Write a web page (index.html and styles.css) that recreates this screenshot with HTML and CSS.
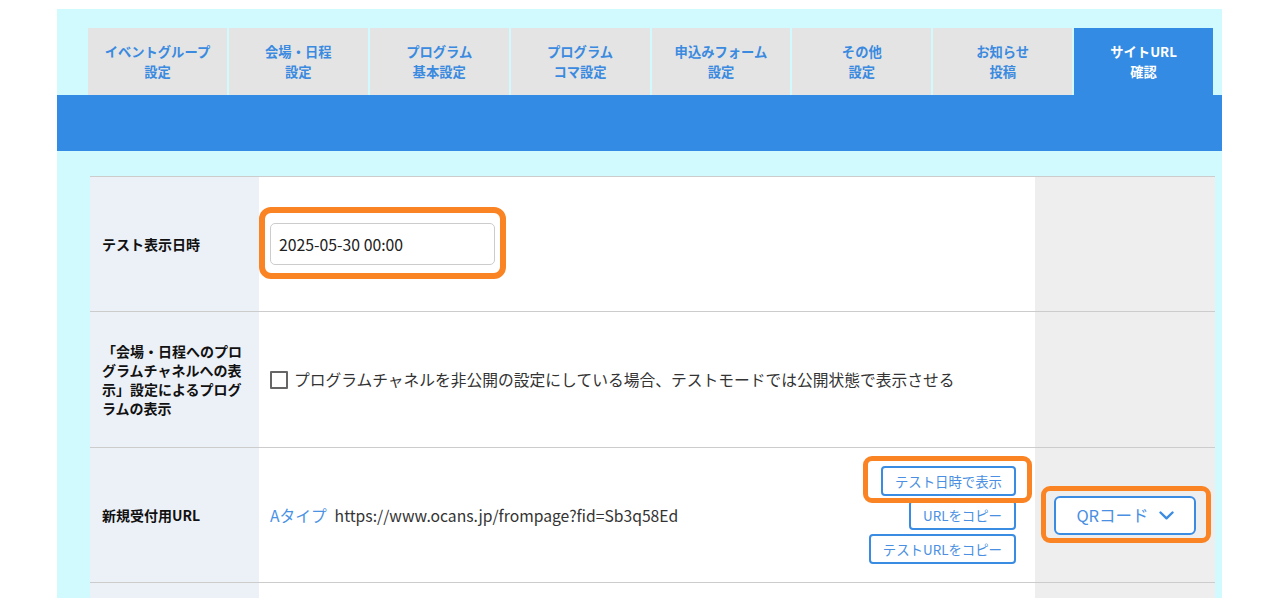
FILE: index.html
```html
<!DOCTYPE html>
<html lang="ja">
<head>
<meta charset="UTF-8">
<title>サイトURL確認</title>
<link rel="stylesheet" href="styles.css">
</head>
<body>
<div class="page">
<div class="tabs">
<div class="tab">イベントグループ<br>設定</div>
<div class="tab">会場・日程<br>設定</div>
<div class="tab">プログラム<br>基本設定</div>
<div class="tab">プログラム<br>コマ設定</div>
<div class="tab">申込みフォーム<br>設定</div>
<div class="tab">その他<br>設定</div>
<div class="tab">お知らせ<br>投稿</div>
<div class="tab active">サイトURL<br>確認</div>
</div>
<div class="band"></div>
<div class="settings">
<div class="row">
<div class="label">テスト表示日時</div>
<div class="value">
<span class="mark mark-input"><input class="date" type="text" value="2025-05-30 00:00"></span>
</div>
<div class="side"></div>
</div>
<div class="row row-tall">
<div class="label">「会場・日程へのプログラムチャネルへの表示」設定によるプログラムの表示</div>
<div class="value">
<label class="check"><span class="box"></span>プログラムチャネルを非公開の設定にしている場合、テストモードでは公開状態で表示させる</label>
</div>
<div class="side"></div>
</div>
<div class="row">
<div class="label">新規受付用URL</div>
<div class="value url-cell">
<div class="url"><span class="type">Aタイプ</span>https://www.ocans.jp/frompage?fid=Sb3q58Ed</div>
<div class="btns">
<span class="mark mark-btn"><button class="btn">テスト日時で表示</button></span>
<button class="btn">URLをコピー</button>
<button class="btn">テストURLをコピー</button>
</div>
</div>
<div class="side side-qr">
<span class="mark mark-qr"><button class="qr">QRコード<svg width="15" height="9" viewBox="0 0 15 9"><polyline points="1.5,1.5 7.5,7.3 13.5,1.5" fill="none" stroke="#3a8be2" stroke-width="2.4" stroke-linecap="round" stroke-linejoin="round"/></svg></button></span>
</div>
</div>
<div class="row">
<div class="label"></div>
<div class="value"></div>
<div class="side"></div>
</div>
</div>
</div>
</body>
</html>
```

FILE: styles.css
```css
body {
margin: 0;
background-color: #fff;
font-family: "Noto Sans CJK JP", "Noto Sans", sans-serif;
color: #333;
}
.page {
margin: 9px 0 0 57px;
width: 1165px;
height: 589px;
overflow: hidden;
background-color: #d1faff;
}
.tabs {
display: flex;
gap: 2px;
margin: 19px 9px 0 31px;
height: 67px;
}
.tab {
flex: 1;
display: flex;
align-items: center;
justify-content: center;
text-align: center;
background-color: #e4e4e4;
color: #3a8ae0;
font-size: 13.3px;
font-weight: bold;
line-height: 20px;
}
.tab.active {
background-color: #338be3;
color: #fff;
}
.band {
height: 56px;
background-color: #338be3;
}
.settings {
margin: 25px 7px 0 33px;
border-top: 1px solid #ccc;
}
.row {
display: grid;
grid-template-columns: 169px 776px 180px;
height: 134px;
border-bottom: 1px solid #ccc;
}
.row-tall {
height: 135px;
}
.label {
display: flex;
align-items: center;
padding: 0 12px;
background-color: #ecf0f7;
color: #111;
font-size: 14px;
font-weight: bold;
line-height: 19px;
}
.value {
display: flex;
align-items: center;
padding: 0 19px 0 11px;
background-color: #fff;
}
.side {
background-color: #eee;
}
.side-qr {
display: flex;
align-items: center;
justify-content: center;
}

/* 注釈の枠 */
.mark {
position: relative;
display: inline-block;
}
.mark::after {
content: "";
position: absolute;
border: 6px solid #fa8423;
border-radius: 12px;
pointer-events: none;
}
.mark-input::after {
top: -16px;
bottom: -14px;
left: -11px;
right: -11px;
}
.mark-btn::after {
top: -10px;
bottom: -7px;
left: -18px;
right: -16px;
border-width: 5px;
border-radius: 9px;
}
.mark-qr::after {
top: -10px;
bottom: -8px;
left: -13px;
right: -15px;
border-width: 5px;
border-radius: 9px;
}

.date {
display: block;
box-sizing: border-box;
width: 225px;
height: 42px;
padding: 0 8px;
border: 1px solid #ccc;
border-radius: 5px;
font-family: "Noto Sans CJK JP", "Noto Sans", sans-serif;
font-size: 15.8px;
color: #222;
}
.check {
display: flex;
align-items: center;
font-size: 15.75px;
color: #333;
}
.box {
box-sizing: border-box;
width: 18px;
height: 18px;
margin-right: 6px;
border: 2px solid #666;
border-radius: 1px;
}
.url-cell {
justify-content: space-between;
}
.url {
font-size: 15.7px;
color: #333;
}
.type {
color: #4a92e4;
margin-right: 8px;
}
.btns {
display: flex;
flex-direction: column;
align-items: flex-end;
gap: 4px;
}
.btn {
display: block;
height: 30px;
padding: 0 12px;
border: 2px solid #3a8be2;
border-radius: 4px;
background-color: #fff;
color: #4a8fe2;
font-family: "Noto Sans CJK JP", "Noto Sans", sans-serif;
font-size: 13.4px;
}
.qr {
display: flex;
align-items: center;
justify-content: center;
gap: 10px;
box-sizing: border-box;
width: 142px;
height: 39px;
border: 2px solid #3a8be2;
border-radius: 6px;
background-color: #fff;
color: #4a8fe2;
font-family: "Noto Sans CJK JP", "Noto Sans", sans-serif;
font-size: 16.5px;
}
```
